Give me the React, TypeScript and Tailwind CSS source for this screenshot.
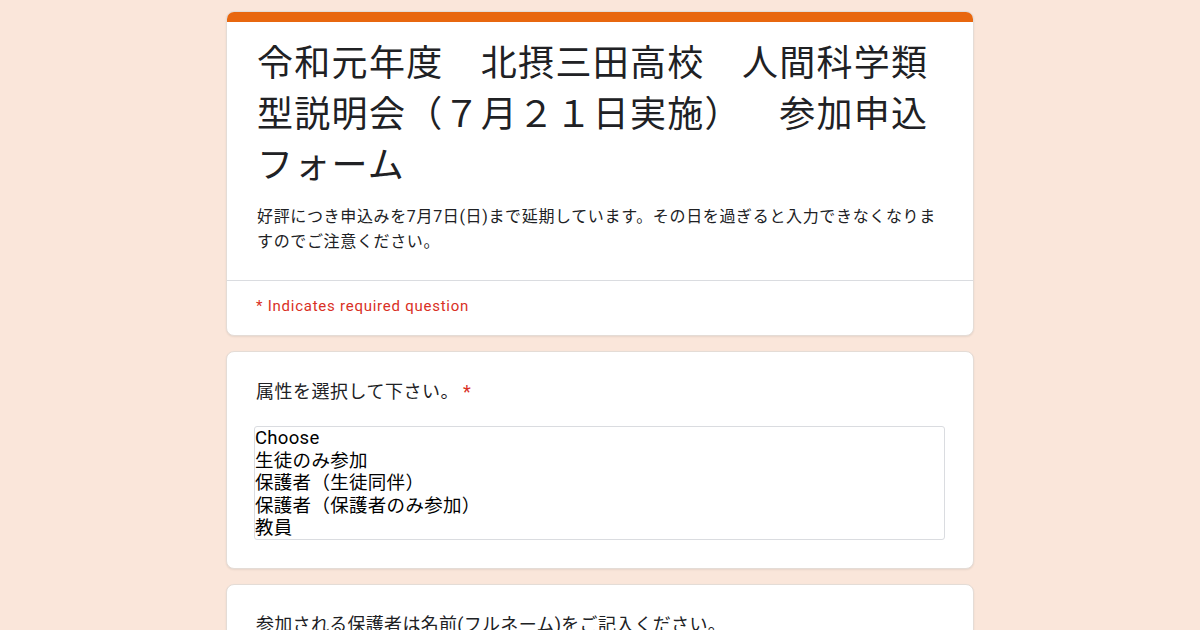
import React from "react";

const jp = { fontFamily: '"Noto Sans CJK JP", sans-serif' };
const rb = { fontFamily: 'Roboto, "Noto Sans CJK JP", sans-serif' };

export default function App() {
  const options = ["Choose", "生徒のみ参加", "保護者（生徒同伴）", "保護者（保護者のみ参加）", "教員"];
  return (
    <div className="w-[1200px] h-[630px] overflow-hidden bg-[#fae6da] [text-spacing-trim:space-all]">
      <div className="w-[748px] mx-auto pt-[11px] flex flex-col gap-[15px]">
        {/* header card */}
        <div className="bg-white rounded-[8px] border border-[#e4dcd6] overflow-hidden shadow-[0_1px_2px_rgba(0,0,0,0.08)]">
          <div className="h-[10px] bg-[#e8670f]" />
          <div className="pl-[30px] pr-[28px] pt-[13px] pb-[26px]">
            <h1 className="text-[36px] leading-[51px] tracking-[1.3px] text-[#202124]" style={jp}>
              令和元年度　北摂三田高校　人間科学類型説明会（７月２１日実施）　参加申込フォーム
            </h1>
            <p className="mt-[16px] text-[16px] leading-[25px] tracking-[0.65px] text-[#202124]" style={rb}>
              好評につき申込みを7月7日(日)まで延期しています。その日を過ぎると入力できなくなりますのでご注意ください。
            </p>
          </div>
          <div className="border-t border-[#dadce0] pl-[29px] pt-[13px] pb-[17px]">
            <p className="text-[15px] leading-[24px] tracking-[0.75px] text-[#d93025]" style={rb}>
              * Indicates required question
            </p>
          </div>
        </div>

        {/* question card */}
        <div className="bg-white rounded-[8px] border border-[#e4dcd6] shadow-[0_1px_2px_rgba(0,0,0,0.08)] pl-[27px] pr-[28px] pt-[28px] pb-[28px]">
          <p className="pl-[2px] text-[18px] leading-[24px] tracking-[0.5px] text-[#202124]" style={rb}>
            属性を選択して下さい。<span className="text-[#d93025] ml-[4px]">*</span>
          </p>
          <div className="mt-[22px] border border-[#dadce0] rounded-[3px] h-[114px] overflow-hidden">
            {options.map((o) => (
              <div key={o} className="text-[18.5px] leading-[22.5px] tracking-[0.3px] text-black" style={rb}>
                {o}
              </div>
            ))}
          </div>
        </div>

        {/* next card */}
        <div className="bg-white rounded-[8px] border border-[#e4dcd6] shadow-[0_1px_2px_rgba(0,0,0,0.08)] pl-[29px] pr-[28px] pt-[28px] pb-[28px]">
          <p className="text-[18px] leading-[24px] tracking-[0.3px] text-[#202124]" style={rb}>
            参加される保護者は名前(フルネーム)をご記入ください。
          </p>
        </div>
      </div>
    </div>
  );
}
